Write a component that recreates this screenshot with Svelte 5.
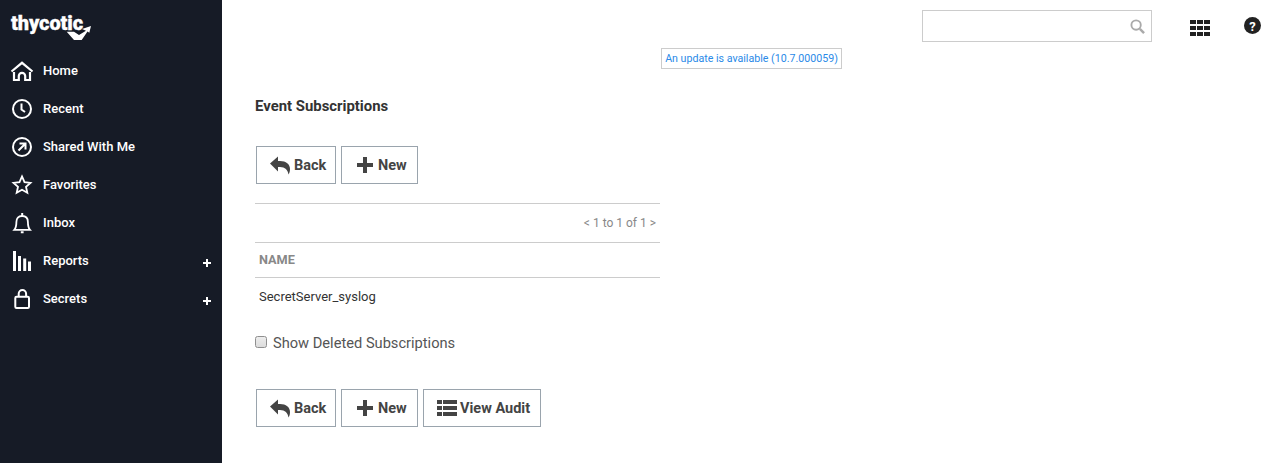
<script>
  const nav = [
    { label: 'Home', icon: 'home' },
    { label: 'Recent', icon: 'clock' },
    { label: 'Shared With Me', icon: 'share' },
    { label: 'Favorites', icon: 'star' },
    { label: 'Inbox', icon: 'bell' },
    { label: 'Reports', icon: 'bars', plus: true },
    { label: 'Secrets', icon: 'lock', plus: true }
  ];
</script>

{#snippet back()}
  <button class="btn back">
    <svg class="bi" width="21" height="19" viewBox="0 0 21 19"><path d="M0 7.500 8 .5V5h2c6 0 10 3 10 8 0 2-.5 4-1.500 5.500C18 14 15 11 10 11H8v4.500z" fill="#444"/></svg>
    <span>Back</span>
  </button>
{/snippet}
{#snippet plusNew()}
  <button class="btn new">
    <svg class="bi" width="16" height="16" viewBox="0 0 16 16"><path d="M6 0h4v6h6v4h-6v6H6v-6H0V6h6z" fill="#444"/></svg>
    <span>New</span>
  </button>
{/snippet}

<div class="shell">
  <aside class="side">
    <div class="logo">
      <span class="wordmark">thycotic</span>
      <svg class="check" width="26" height="16" viewBox="0 0 26 16"><path d="M.7 6.700H8L13 10l7-4.300L16 4l9-3-1.700 6.700-1.800-1.200L15.700 15H8z" fill="#fff"/></svg>
    </div>
    <nav>
      {#each nav as n}
        <div class="item">
          <svg class="ic" width="24" height="24" viewBox="0 0 24 24" fill="none" stroke="#fff" stroke-width="2">
            {#if n.icon === 'home'}
              <path d="M1.500 12.500 12 3.800l10.500 8.700" stroke-width="2.200"/><path d="M4 13v8h4.800v-4a3.200 3.200 0 0 1 6.400 0v4H20v-8" stroke-width="2.200"/>
            {:else if n.icon === 'clock'}
              <circle cx="12" cy="12" r="9"/><path d="M11.500 6.500v6l3.500 2.500"/>
            {:else if n.icon === 'share'}
              <circle cx="12" cy="12" r="9"/><path d="M8.500 15.500l6.500-6.500M9.500 8.500h6v6"/>
            {:else if n.icon === 'star'}
              <path d="M12 3.400l2.500 5.700 6 .7-4.500 4 1.300 6L12 16.800l-5.300 3 1.300-6-4.500-4 6-.7z" stroke-width="1.800"/>
            {:else if n.icon === 'bell'}
              <path d="M4.300 18.800c1.600-1.800 2.100-3 2.100-7.800 0-3.800 2-6 5.700-6s5.800 2.200 5.800 6c0 4.800.5 6 2.100 7.800z" stroke-width="1.800"/><path d="M12.200 5V2M10.800 21.300h2.800"/>
            {:else if n.icon === 'bars'}
              <path d="M4.500 2v20M9.500 7v15M14.700 9.500V22M19.500 12.500V22" stroke-width="3"/>
            {:else}
              <rect x="5.300" y="9.700" width="13.700" height="11.300" rx="1.200"/><path d="M8.700 9.700V6.700a3.700 3.700 0 0 1 7.400 0v3"/>
            {/if}
          </svg>
          <span class="lbl">{n.label}</span>
          {#if n.plus}
            <svg class="plus" width="8" height="8" viewBox="0 0 8 8"><path d="M3 0h2v3h3v2H5v3H3V5H0V3h3z" fill="#fff"/></svg>
          {/if}
        </div>
      {/each}
    </nav>
  </aside>

  <main class="main">
    <div class="top">
      <div class="search">
        <svg width="15" height="15" viewBox="0 0 16 16" fill="none" stroke="#aaa"><circle cx="6.500" cy="6.500" r="5" stroke-width="2"/><path d="M10.500 10.500 15 15" stroke-width="2.600"/></svg>
      </div>
      <div class="grid">
        {#each Array(9) as _}<i></i>{/each}
      </div>
      <svg class="help" width="17" height="17" viewBox="0 0 17 17"><circle cx="8.500" cy="8.500" r="8.500" fill="#222"/><text x="8.500" y="13.500" text-anchor="middle" class="q">?</text></svg>
    </div>
    <div class="updwrap"><span class="update">An update is available (10.7.000059)</span></div>
    <h1>Event Subscriptions</h1>
    <div class="btns first">
      {@render back()}
      {@render plusNew()}
    </div>
    <div class="table">
      <div class="pager">&lt; 1 to 1 of 1 &gt;</div>
      <div class="th">NAME</div>
      <div class="td">SecretServer_syslog</div>
    </div>
    <label class="chk"><input type="checkbox" /> <span>Show Deleted Subscriptions</span></label>
    <div class="btns second">
      {@render back()}
      {@render plusNew()}
      <button class="btn audit">
        <svg class="bi" width="20" height="16" viewBox="0 0 20 16" fill="#444"><path d="M0 0h5v4H0zM6 0h14v4H6zM0 6h5v4H0zM6 6h14v4H6zM0 12h5v4H0zM6 12h14v4H6z"/></svg>
        <span>View Audit</span>
      </button>
    </div>
  </main>
</div>

<style>
  :global(body) { margin: 0; background: #fff; font-family: Roboto, sans-serif; }
  .shell { display: flex; height: 463px; overflow: hidden; }
  .side { width: 222px; flex: none; background: #161b26; color: #fff; }
  .logo { position: relative; height: 52px; padding: 12px 0 0 11px; box-sizing: border-box; }
  .wordmark { font: 900 20px/22px Roboto, sans-serif; letter-spacing: -0.1px; display: block; -webkit-text-stroke: 0.3px #fff; }
  .check { position: absolute; left: 66px; top: 25px; }
  .item { height: 38px; display: flex; align-items: center; padding-left: 10px; position: relative; }
  .ic { flex: none; }
  .lbl { margin-left: 9px; font-size: 13px; font-weight: 500; position: relative; top: -1px; }
  .plus { position: absolute; left: 203px; top: 17px; }
  .main { flex: 1; position: relative; padding-left: 33px; color: #333; }
  .top { display: flex; justify-content: flex-end; align-items: center; height: 32px; margin-top: 10px; padding-right: 12px; }
  .search { width: 230px; height: 32px; border: 1px solid #ccc; display: flex; align-items: center; justify-content: flex-end; padding-right: 6px; box-sizing: border-box; }
  .grid { display: grid; grid-template-columns: repeat(3, 6px); grid-auto-rows: 4px; gap: 2px 1px; margin: 4px 34px 0 38px; }
  .grid i { background: #222; display: block; }
  .help { margin-bottom: 2px; }
  .q { font: 700 13px Roboto, sans-serif; fill: #fff; }
  .updwrap { margin-left: 406px; height: 19px; margin-top: 5px; }
  .update { display: inline-block; box-sizing: border-box; height: 21px; width: 181px; border: 1px solid #ccc; color: #2a8ae8; font-size: 10.650px; line-height: 19px; text-align: center; white-space: nowrap; }
  h1 { margin: 30px 0 0; font-size: 14.900px; line-height: 20px; font-weight: 700; color: #333; }
  .btns { display: flex; gap: 5px; margin-left: 1px; }
  .first { margin-top: 30px; }
  .second { margin-top: 36px; }
  .btn { height: 38px; box-sizing: border-box; border: 1px solid #9aa4ad; background: #fff; color: #444; font: 700 14.500px Roboto, sans-serif; display: flex; align-items: center; justify-content: flex-start; padding: 0; }
  .back { width: 80px; gap: 3px; padding-left: 13px; }
  .new { width: 77px; gap: 5px; padding-left: 15px; }
  .audit { width: 118px; gap: 3px; padding-left: 13px; }
  .table { width: 405px; margin-top: 19px; border-top: 1px solid #ccc; }
  .pager { height: 38px; border-bottom: 1px solid #ccc; text-align: right; font-size: 12px; line-height: 38px; color: #888; padding-right: 4px; }
  .th { height: 34px; border-bottom: 1px solid #ccc; font-size: 12.700px; font-weight: 700; color: #888; line-height: 33px; padding-left: 4px; }
  .td { height: 38px; font-size: 13px; line-height: 38px; padding-left: 4px; color: #333; }
  .chk { display: flex; align-items: center; height: 20px; margin-top: 17px; font-size: 14.650px; color: #555; }
  .chk input { appearance: none; margin: 0 6px 2px 0; width: 12px; height: 12px; box-sizing: border-box; border: 1px solid #8f8f8f; border-radius: 2.500px; background: linear-gradient(#ededed, #dcdcdc); }
</style>
